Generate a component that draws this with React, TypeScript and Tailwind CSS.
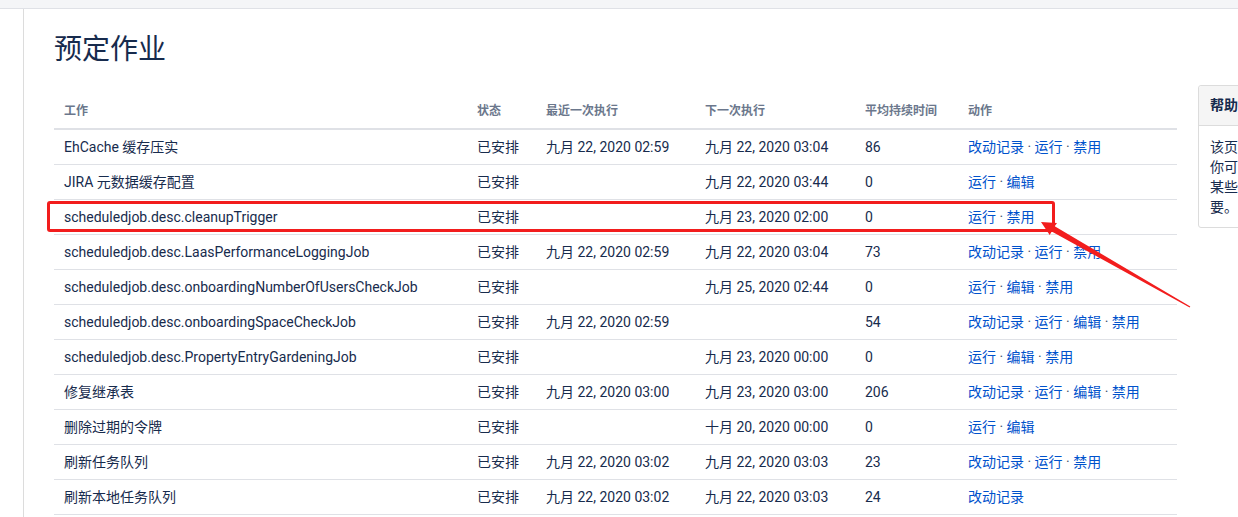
const jobs = [
  { name: "EhCache 缓存压实", last: "九月 22, 2020 02:59", next: "九月 22, 2020 03:04", avg: "86", actions: ["改动记录", "运行", "禁用"] },
  { name: "JIRA 元数据缓存配置", last: "", next: "九月 22, 2020 03:44", avg: "0", actions: ["运行", "编辑"] },
  { name: "scheduledjob.desc.cleanupTrigger", last: "", next: "九月 23, 2020 02:00", avg: "0", actions: ["运行", "禁用"] },
  { name: "scheduledjob.desc.LaasPerformanceLoggingJob", last: "九月 22, 2020 02:59", next: "九月 22, 2020 03:04", avg: "73", actions: ["改动记录", "运行", "禁用"] },
  { name: "scheduledjob.desc.onboardingNumberOfUsersCheckJob", last: "", next: "九月 25, 2020 02:44", avg: "0", actions: ["运行", "编辑", "禁用"] },
  { name: "scheduledjob.desc.onboardingSpaceCheckJob", last: "九月 22, 2020 02:59", next: "", avg: "54", actions: ["改动记录", "运行", "编辑", "禁用"] },
  { name: "scheduledjob.desc.PropertyEntryGardeningJob", last: "", next: "九月 23, 2020 00:00", avg: "0", actions: ["运行", "编辑", "禁用"] },
  { name: "修复继承表", last: "九月 22, 2020 03:00", next: "九月 23, 2020 03:00", avg: "206", actions: ["改动记录", "运行", "编辑", "禁用"] },
  { name: "删除过期的令牌", last: "", next: "十月 20, 2020 00:00", avg: "0", actions: ["运行", "编辑"] },
  { name: "刷新任务队列", last: "九月 22, 2020 03:02", next: "九月 22, 2020 03:03", avg: "23", actions: ["改动记录", "运行", "禁用"] },
  { name: "刷新本地任务队列", last: "九月 22, 2020 03:02", next: "九月 22, 2020 03:03", avg: "24", actions: ["改动记录"] },
];

const cols = "grid grid-cols-[413px_69px_159px_160px_103px_219px] items-center";

const App = () => {
  return (
    <div className="relative w-[1238px] h-[517px] overflow-hidden bg-white text-[14px] text-[#172b4d] font-['Roboto','Noto_Sans_CJK_SC',sans-serif]">
      <div className="h-[9px] bg-[#f4f5f7] border-b border-[#dfe1e6]" />
      <div className="flex h-[508px]">
        <div className="w-[24px] shrink-0 border-r border-[#dcdcdc]" />
        <main className="pl-[30px] pt-[23px] flex-1 min-w-0">
          <h1 className="text-[28px] leading-[36px] font-normal mb-[17px]">预定作业</h1>
          <div className="flex items-start gap-[21px]">
            <div className="w-[1123px] shrink-0 pt-[9px]">
              <div className={`${cols} h-[36px] border-b-2 border-[#dfe1e6] text-[12px] font-semibold text-[#6b778c]`}>
                <div className="px-[10px]">工作</div>
                <div className="px-[10px]">状态</div>
                <div className="px-[10px]">最近一次执行</div>
                <div className="px-[10px]">下一次执行</div>
                <div className="px-[10px]">平均持续时间</div>
                <div className="px-[10px]">动作</div>
              </div>
              {jobs.map((job) => (
                <div key={job.name} className={`${cols} h-[35px] border-b border-[#dfe1e6]`}>
                  <div className="px-[10px] whitespace-nowrap">{job.name}</div>
                  <div className="px-[10px]">已安排</div>
                  <div className="px-[10px] whitespace-nowrap">{job.last}</div>
                  <div className="px-[10px] whitespace-nowrap">{job.next}</div>
                  <div className="px-[10px]">{job.avg}</div>
                  <div className="px-[10px] whitespace-nowrap">
                    {job.actions.map((a, i) => (
                      <span key={a}>
                        {i > 0 && <span className="text-[#42526e]"> · </span>}
                        <a className="text-[#0052cc]">{a}</a>
                      </span>
                    ))}
                  </div>
                </div>
              ))}
            </div>
            <aside className="w-[280px] shrink-0 border border-[#dcdcdc] rounded-[3px]">
              <div className="h-[40px] flex items-center px-[11px] bg-[#f5f5f5] border-b border-[#dcdcdc] font-bold rounded-t-[3px] whitespace-nowrap">
                帮助提示
              </div>
              <div className="px-[11px] pt-[11px] pb-[10px] leading-[20px] whitespace-nowrap">
                该页面列出了系统中的预定作业。
                <br />
                你可以在这里手动运行作业，
                <br />
                某些作业也可以被编辑或禁用，如有需
                <br />
                要。
              </div>
            </aside>
          </div>
        </main>
      </div>

      {/* annotation: highlight box + arrow */}
      <div className="absolute left-[47px] top-[201px] w-[1008px] h-[31px] border-[3px] border-[#f21d1d] rounded-[3px] pointer-events-none" />
      <svg className="absolute inset-0 pointer-events-none" width="1238" height="517">
        <polygon
          points="1041,222 1057,223 1054.7,226.3 1190.3,306.4 1189.7,307.6 1051.7,231.5 1049.7,235"
          fill="#f21d1d"
        />
      </svg>
    </div>
  );
};

export default App;
